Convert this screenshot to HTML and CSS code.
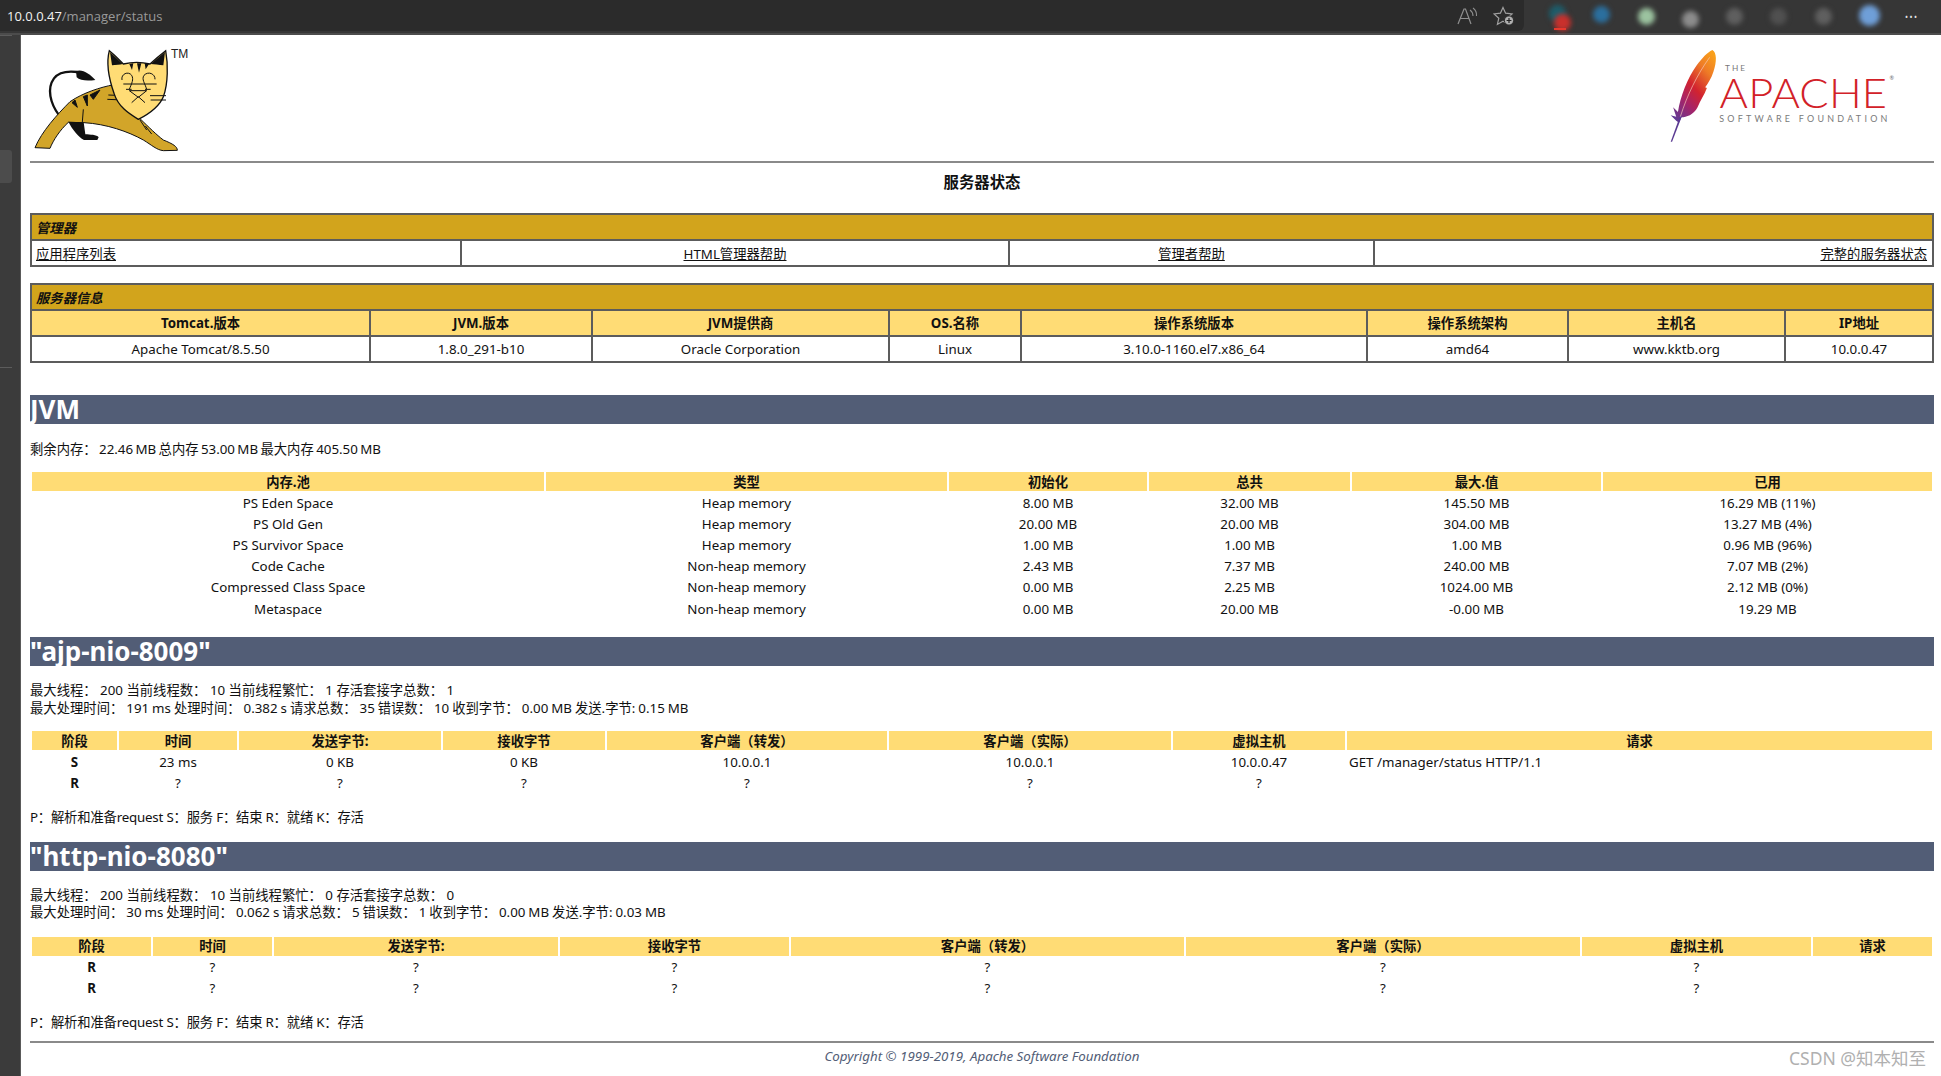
FILE: index.html
```html
<!DOCTYPE html>
<html lang="zh-CN">
<head>
<meta charset="utf-8">
<title>/manager</title>
<link rel="stylesheet" href="styles.css">
</head>
<body>
<header class="topbar">
  <div class="address">
    <div class="url"><span class="host">10.0.0.47</span><span class="path">/manager/status</span></div>
    <div class="addr-icons">
      <svg class="aicon" width="24" height="20" viewBox="0 0 24 20"><path d="M2 18 L8 3 L9.5 3 L15 18 M4.5 12.5 H13" fill="none" stroke="#8f8f8f" stroke-width="1.2"/><path d="M14 4 Q17 6 17 10 M17 2 Q21 5 20.5 10" fill="none" stroke="#8f8f8f" stroke-width="1.1"/></svg>
      <svg class="aicon" width="24" height="20" viewBox="0 0 24 20"><path d="M10 1.5 L12.6 7.2 L19 7.9 L14.2 12.2 L15.6 18.4 L10 15.2 L4.4 18.4 L5.8 12.2 L1 7.9 L7.4 7.2 Z" fill="none" stroke="#a0a0a0" stroke-width="1.2"/><circle cx="16" cy="14.5" r="4.6" fill="#b0b0b0" stroke="#2b2b2b" stroke-width="1"/><path d="M13.6 14.5 H18.4 M16 12.1 V16.9" stroke="#222" stroke-width="1.2"/></svg>
    </div>
  </div>
  <div class="extensions">
    <div class="ext-stack"><span class="ext ext-teal"></span><span class="ext ext-red"></span><span class="ext-bar"></span></div>
    <span class="ext ext-blue"></span>
    <span class="ext ext-green"></span>
    <span class="ext ext-gray1"></span>
    <span class="ext ext-gray2"></span>
    <span class="ext ext-gray3"></span>
    <span class="ext ext-gray2"></span>
    <span class="ext ext-sky"></span>
  </div>
  <div class="more">&#8226;&#8226;&#8226;</div>
</header>

<div class="shell">
  <aside class="rail">
    <div class="rail-line"></div>
    <div class="rail-tab"></div>
    <div class="rail-line rail-line-low"></div>
  </aside>

  <main class="page">
    <div class="logos">
      <div class="cat-wrap">
        <svg class="cat" width="180" height="110" viewBox="90 135 540 330">
          <path d="M178 347 C150 310 140 265 162 235 C175 218 200 212 232 216" fill="none" stroke="#111" stroke-width="7"/>
          <path d="M228 214 C245 205 270 222 286 240 C265 243 240 243 230 232 Z" fill="#111"/>
          <path d="M342 254 C300 262 250 278 210 305 C170 345 125 395 105 443 L150 445 C160 420 180 390 205 367 L252 368 C320 372 385 395 430 420 C455 435 470 450 490 452 L532 451 C532 440 520 432 490 420 C470 405 445 380 420 356 Z" fill="#D2A529" stroke="#111" stroke-width="3"/>
          <path d="M205 365 L251 367 L256 403 C270 404 290 404 296 412 L292 420 L252 420 C235 410 218 390 205 365 Z" fill="#111"/>
          <path d="M250 328 L247 366 M300 270 L280 298 L270 285 Z M262 285 L262 318 L250 290 Z M225 300 L232 322 L216 308 Z M325 285 L372 287 M322 298 L372 300 M420 360 L440 390 M436 378 L455 402" fill="#111" stroke="#111" stroke-width="3"/>
          <path d="M328 152 C345 165 358 180 370 192 C395 186 425 186 450 192 C465 178 480 165 497 152 C504 190 505 250 490 290 C480 315 450 340 415 358 C385 340 355 320 342 280 C328 240 318 190 328 152 Z" fill="#FFDC75" stroke="#111" stroke-width="4"/>
          <path d="M330 156 L336 196 C348 195 360 194 368 192 Z M495 156 L490 196 C478 194 462 193 452 192 Z" fill="#111"/>
          <path d="M411 190 L417 218 L424 190 Z M388 192 L396 210 L400 190 Z M434 190 L437 208 L447 192 Z" fill="#111"/>
          <path d="M370 252 H470 M378 268 H395 M435 268 H452" fill="none" stroke="#111" stroke-width="3"/>
          <path d="M366 240 C362 222 385 212 395 226 C402 238 395 250 388 268 M465 238 C466 222 445 212 432 226 C424 238 435 250 440 268" fill="none" stroke="#111" stroke-width="3"/>
          <path d="M388 272 H440 L415 292 Z" fill="none" stroke="#111" stroke-width="3"/>
          <path d="M415 290 L395 308 M415 290 L435 308 M450 287 H498 M452 300 H498" fill="none" stroke="#111" stroke-width="3"/>
        </svg>
        <span class="tm">TM</span>
      </div>
      <svg class="apache" width="248" height="100" viewBox="750 135 720 300" preserveAspectRatio="none">
        <defs>
          <linearGradient id="feather" x1="0.85" y1="0" x2="0.15" y2="1">
            <stop offset="0" stop-color="#f9a01b"/>
            <stop offset="0.22" stop-color="#ee7b26"/>
            <stop offset="0.5" stop-color="#d2232f"/>
            <stop offset="0.72" stop-color="#a62368"/>
            <stop offset="1" stop-color="#5f3a96"/>
          </linearGradient>
        </defs>
        <path d="M905 150 C918 158 918 185 908 215 C902 235 892 250 884 262 L889 264 C882 285 870 300 862 322 C850 345 830 352 815 352 L808 368 L800 362 L784 346 L800 350 L791 322 L805 336 C812 290 832 235 860 195 C875 175 890 157 905 150 Z" fill="url(#feather)"/>
        <path d="M812 345 L784 425 L788 425 L816 350 Z" fill="#5a3a92"/>
        <path d="M897 172 C860 225 832 285 812 350" fill="none" stroke="#f7c7b8" stroke-width="2"/>
        <text class="ap-the" x="942" y="212" textLength="58">THE</text>
        <text class="ap-main" x="926" y="325" textLength="486">APACHE</text>
        <text class="ap-small" x="1419" y="240">®</text>
        <text class="ap-sub" x="925" y="365" textLength="488">SOFTWARE FOUNDATION</text>
      </svg>
    </div>
    <div class="rule"></div>
    <div class="title">服务器状态</div>

    <table class="boxed t-manager">
      <colgroup><col class="mg1"><col class="mg2"><col class="mg3"><col class="mg4"></colgroup>
      <tr><td class="section" colspan="4">管理器</td></tr>
      <tr>
        <td class="left"><a href="#">应用程序列表</a></td>
        <td><a href="#">HTML管理器帮助</a></td>
        <td><a href="#">管理者帮助</a></td>
        <td class="right"><a href="#">完整的服务器状态</a></td>
      </tr>
    </table>

    <table class="boxed t-server">
      <colgroup><col class="sv1"><col class="sv2"><col class="sv3"><col class="sv4"><col class="sv5"><col class="sv6"><col class="sv7"><col class="sv8"></colgroup>
      <tr><td class="section" colspan="8">服务器信息</td></tr>
      <tr><th>Tomcat.版本</th><th>JVM.版本</th><th>JVM提供商</th><th>OS.名称</th><th>操作系统版本</th><th>操作系统架构</th><th>主机名</th><th>IP地址</th></tr>
      <tr><td>Apache Tomcat/8.5.50</td><td>1.8.0_291-b10</td><td>Oracle Corporation</td><td>Linux</td><td>3.10.0-1160.el7.x86_64</td><td>amd64</td><td>www.kktb.org</td><td>10.0.0.47</td></tr>
    </table>

    <h1 class="bar bar-jvm">JVM</h1>
    <p class="stats stats-jvm">剩余内存： 22.46 MB 总内存 53.00 MB 最大内存 405.50 MB</p>
    <table class="grid t-mem">
      <colgroup><col class="me1"><col class="me2"><col class="me3"><col class="me4"><col class="me5"><col class="me6"></colgroup>
      <tr><th>内存.池</th><th>类型</th><th>初始化</th><th>总共</th><th>最大.值</th><th>已用</th></tr>
      <tr><td>PS Eden Space</td><td>Heap memory</td><td>8.00 MB</td><td>32.00 MB</td><td>145.50 MB</td><td>16.29 MB (11%)</td></tr>
      <tr><td>PS Old Gen</td><td>Heap memory</td><td>20.00 MB</td><td>20.00 MB</td><td>304.00 MB</td><td>13.27 MB (4%)</td></tr>
      <tr><td>PS Survivor Space</td><td>Heap memory</td><td>1.00 MB</td><td>1.00 MB</td><td>1.00 MB</td><td>0.96 MB (96%)</td></tr>
      <tr><td>Code Cache</td><td>Non-heap memory</td><td>2.43 MB</td><td>7.37 MB</td><td>240.00 MB</td><td>7.07 MB (2%)</td></tr>
      <tr><td>Compressed Class Space</td><td>Non-heap memory</td><td>0.00 MB</td><td>2.25 MB</td><td>1024.00 MB</td><td>2.12 MB (0%)</td></tr>
      <tr><td>Metaspace</td><td>Non-heap memory</td><td>0.00 MB</td><td>20.00 MB</td><td>-0.00 MB</td><td>19.29 MB</td></tr>
    </table>

    <h1 class="bar bar-ajp">"ajp-nio-8009"</h1>
    <p class="stats stats-conn">最大线程： 200 当前线程数： 10 当前线程繁忙： 1 存活套接字总数： 1<br><span class="tight">最大处理时间： 191 ms 处理时间： 0.382 s 请求总数： 35 错误数： 10 收到字节： 0.00 MB 发送.字节: 0.15 MB</span></p>
    <table class="grid t-ajp">
      <colgroup><col class="aj1"><col class="aj2"><col class="aj3"><col class="aj4"><col class="aj5"><col class="aj6"><col class="aj7"><col class="aj8"></colgroup>
      <tr><th>阶段</th><th>时间</th><th>发送字节:</th><th>接收字节</th><th>客户端（转发）</th><th>客户端（实际）</th><th>虚拟主机</th><th>请求</th></tr>
      <tr><td class="stage">S</td><td>23 ms</td><td>0 KB</td><td>0 KB</td><td>10.0.0.1</td><td>10.0.0.1</td><td>10.0.0.47</td><td class="req">GET /manager/status HTTP/1.1</td></tr>
      <tr><td class="stage">R</td><td>?</td><td>?</td><td>?</td><td>?</td><td>?</td><td>?</td><td class="req"></td></tr>
    </table>
    <p class="legend">P：解析和准备request S：服务 F：结束 R：就绪 K：存活</p>

    <h1 class="bar bar-http">"http-nio-8080"</h1>
    <p class="stats stats-conn">最大线程： 200 当前线程数： 10 当前线程繁忙： 0 存活套接字总数： 0<br><span class="tight">最大处理时间： 30 ms 处理时间： 0.062 s 请求总数： 5 错误数： 1 收到字节： 0.00 MB 发送.字节: 0.03 MB</span></p>
    <table class="grid t-http">
      <colgroup><col class="ht1"><col class="ht2"><col class="ht3"><col class="ht4"><col class="ht5"><col class="ht6"><col class="ht7"><col class="ht8"></colgroup>
      <tr><th>阶段</th><th>时间</th><th>发送字节:</th><th>接收字节</th><th>客户端（转发）</th><th>客户端（实际）</th><th>虚拟主机</th><th>请求</th></tr>
      <tr><td class="stage">R</td><td>?</td><td>?</td><td>?</td><td>?</td><td>?</td><td>?</td><td></td></tr>
      <tr><td class="stage">R</td><td>?</td><td>?</td><td>?</td><td>?</td><td>?</td><td>?</td><td></td></tr>
    </table>
    <p class="legend">P：解析和准备request S：服务 F：结束 R：就绪 K：存活</p>

    <div class="rule rule-foot"></div>
    <footer class="copy">Copyright © 1999-2019, Apache Software Foundation</footer>
    <div class="watermark">CSDN @知本知至</div>
  </main>
</div>
</body>
</html>
```
FILE: styles.css
```css
* { box-sizing: border-box; }
html, body { margin: 0; padding: 0; height: 100%; overflow: hidden; background: #fff; }
body { font-family: "Noto Sans", "Noto Sans CJK SC", sans-serif; font-size: 13.33px; color: #111; }

/* browser chrome */
.topbar { height: 35px; background: #363636; border-bottom: 2px solid #4c4c4c; display: flex; align-items: center; }
.address { width: 1524px; height: 31px; margin-top: -2px; background: #2b2b2b; border-radius: 0 0 6px 0; display: flex; align-items: center; justify-content: space-between; padding: 0 7px 0 7px; }
.url { font-family: "Open Sans", sans-serif; font-size: 13px; line-height: 18px; }
.host { color: #f2f2f2; }
.path { color: #9a9a9a; }
.addr-icons { display: flex; gap: 13px; align-items: center; }
.aicon { display: block; }
.extensions { display: flex; align-items: center; gap: 27.3px; margin-left: 25px; width: 345px; }
.ext { display: block; width: 17px; height: 17px; border-radius: 50%; filter: blur(2.5px); }
.ext-stack { position: relative; width: 17px; height: 31px; }
.ext-teal { position: absolute; left: 0; top: 4px; background: #1d5d6b; }
.ext-red { position: absolute; left: 5px; top: 13px; background: #c9302c; }
.ext-bar { position: absolute; left: 5px; top: 27px; width: 12px; height: 2px; background: #e8392e; }
.ext-blue { background: #2b6f9e; margin-top: -4px; }
.ext-green { background: #9cc3a0; margin-top: 0; }
.ext-gray1 { background: #8c8c8c; margin-top: 5px; }
.ext-gray2 { background: #5f5f5f; }
.ext-gray3 { background: #505050; }
.ext-sky { background: #6f9fd8; width: 21px; height: 21px; margin-top: -2px; }
.more { color: #e6e6e6; font-size: 8px; letter-spacing: 1.5px; margin-left: 11px; line-height: 12px; }

.shell { display: flex; height: 1041px; }
.rail { width: 21px; flex: none; background: #3b3b3b; border-right: 1px solid #5a5a5a; padding-top: 0; }
.rail-line { width: 12px; height: 1px; background: #5c5c5c; }
.rail-tab { width: 12px; height: 33px; margin-top: 114px; background: #4c4c4c; border-radius: 0 3px 3px 0; }
.rail-line-low { margin-top: 184px; }

.page { position: relative; flex: 1; padding: 0 7px 0 9px; background: #fff; min-width: 0; }

.logos { height: 126px; display: flex; justify-content: space-between; align-items: flex-start; }
.cat-wrap { position: relative; padding-top: 10px; }
.cat { display: block; }
.tm { position: absolute; left: 141px; top: 13px; font-family: "Liberation Sans", sans-serif; font-size: 12px; line-height: 12px; color: #222; }
.apache { display: block; margin-top: 10px; margin-right: 27px; }
.ap-the { font-family: Lato, sans-serif; font-size: 24px; fill: #777; }
.ap-main { font-family: Lato, sans-serif; font-weight: 300; font-size: 126px; fill: #d22128; }
.ap-small { font-family: Lato, sans-serif; font-size: 16px; fill: #666; }
.ap-sub { font-family: Lato, sans-serif; font-size: 26px; fill: #7a7a7a; }

.rule { height: 2px; background: #8a8a8a; }
.rule-foot { margin-top: 9px; }
.title { height: 38px; line-height: 40px; margin-bottom: 12px; text-align: center; font-size: 15.4px; font-weight: 700; color: #111; }

/* bordered tables */
.boxed { width: 1902px; margin-left: 0; table-layout: fixed; border-collapse: collapse; }
.boxed td, .boxed th { border: 2px solid #5c5c5c; padding: 0 4px; height: 26px; line-height: 20px; text-align: center; font-weight: 400; white-space: nowrap; }
.boxed th { background: #FFDC75; font-weight: 700; }
.boxed td.section { background: #D2A41C; text-align: left; font-weight: 700; font-style: italic; padding-top: 2px; }
.t-manager td { padding-top: 2px; }
.boxed .left { text-align: left; }
.boxed .right { text-align: right; padding-right: 5px; }
.boxed a { color: #111; text-decoration: underline; }
.t-server { margin-top: 16px; }

.mg1 { width: 430px; } .mg2 { width: 548px; } .mg3 { width: 365px; } .mg4 { width: 559px; }
.sv1 { width: 339px; } .sv2 { width: 222px; } .sv3 { width: 297px; } .sv4 { width: 132px; }
.sv5 { width: 346px; } .sv6 { width: 201px; } .sv7 { width: 217px; } .sv8 { width: 148px; }

/* section bars */
.bar { margin: 0; height: 29px; line-height: 29px; background: #525D76; color: #fff; font-size: 26px; font-weight: 700; font-family: "Noto Sans", sans-serif; white-space: nowrap; }
.bar-jvm { margin-top: 32px; }
.bar-ajp { margin-top: 17px; }
.bar-http { margin-top: 15px; }

.stats { margin: 0; line-height: 17.5px; white-space: nowrap; }
.stats-jvm { margin-top: 16px; height: 19px; line-height: 19px; word-spacing: -1.1px; }
.stats-conn { margin-top: 16px; }
.tight { word-spacing: -0.5px; }
.legend { margin: 13px 0 0; line-height: 19px; height: 19px; white-space: nowrap; letter-spacing: -0.2px; }

/* plain tables */
.grid { width: 1904px; table-layout: fixed; border-collapse: separate; border-spacing: 2px; }
.t-mem { margin-top: 11px; }
.t-ajp { margin-top: 12px; }
.t-http { margin-top: 13px; }
.grid th { background: #FFDC75; font-weight: 700; height: 19px; padding: 0; line-height: 18px; text-align: center; }
.grid td { height: 19.2px; padding: 0; line-height: 18px; text-align: center; white-space: nowrap; }
.grid td.stage { font-weight: 700; }
.grid td.req { text-align: left; padding-left: 2px; }

.me1 { width: 512px; } .me2 { width: 401px; } .me3 { width: 198px; } .me4 { width: 201px; } .me5 { width: 249px; } .me6 { width: 329px; }
.aj1 { width: 85px; } .aj2 { width: 118px; } .aj3 { width: 202px; } .aj4 { width: 162px; } .aj5 { width: 280px; } .aj6 { width: 282px; } .aj7 { width: 172px; } .aj8 { width: 585px; }
.ht1 { width: 119px; } .ht2 { width: 119px; } .ht3 { width: 284px; } .ht4 { width: 229px; } .ht5 { width: 393px; } .ht6 { width: 394px; } .ht7 { width: 229px; } .ht8 { width: 119px; }

.copy { margin-top: 3px; line-height: 20px; text-align: center; font-style: italic; font-size: 13.33px; color: #525D76; }
.watermark { position: absolute; right: 15px; bottom: 7px; font-size: 17.5px; line-height: 22px; color: #b0b0b0; white-space: nowrap; }
```
